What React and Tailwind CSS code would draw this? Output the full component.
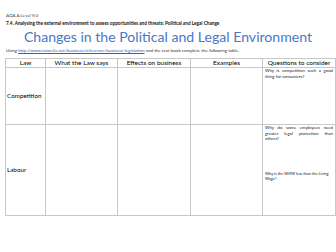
import React from "react";

const F = { fontFamily: "Lato, 'Open Sans', sans-serif" };

function Cell({ children, className = "" }) {
  return <div className={"bg-white " + className}>{children}</div>;
}

export default function App() {
  return (
    <div className="w-[336px] h-[252px] bg-white text-black overflow-hidden" style={F}>
      <div className="pl-[6px] pt-[13px]">
        <div className="text-[4.5px] leading-[6px] text-[#444]">AQA A Level Yr2</div>
        <div className="text-[4.7px] leading-[6px] font-bold mt-[1px] text-[#111] whitespace-nowrap">
          7.4. Analysing the external environment to assess opportunities and threats: Political and Legal Change
        </div>
      </div>
      <div className="text-center text-[14.1px] leading-[18px] text-[#4a77c4] mt-[2px]">
        Changes in the Political and Legal Environment
      </div>
      <div className="pl-[6px] text-[4.5px] leading-[6px] mt-[2px] text-[#333] whitespace-nowrap">
        Using <span className="text-[#3060c0] underline">http://www.tutor2u.net/business/reference/business-legislation</span> and the text book complete the following table.
      </div>
      <div className="ml-[5px] mt-[4px] w-[331px] grid grid-cols-[39px_71px_72px_71px_72px] grid-rows-[8px_56px_90px] gap-px p-px bg-[#c8c8c8]">
        <Cell className="flex items-center justify-center text-[6.5px] leading-[8px]">Law</Cell>
        <Cell className="flex items-center justify-center text-[6.5px] leading-[8px]">What the Law says</Cell>
        <Cell className="flex items-center justify-center text-[6.5px] leading-[8px]">Effects on business</Cell>
        <Cell className="flex items-center justify-center text-[6.5px] leading-[8px]">Examples</Cell>
        <Cell className="flex items-center justify-center text-[6.5px] leading-[8px]">Questions to consider</Cell>

        <Cell className="flex items-center pl-[1px] text-[6.3px]">Competition</Cell>
        <Cell />
        <Cell />
        <Cell />
        <Cell className="px-[2px] text-[4.3px] leading-[5.5px] text-justify [text-align-last:left] text-[#222]">
          Why is competition such a good thing for consumers?
        </Cell>

        <Cell className="flex items-center pl-[1px] text-[6.3px]">Labour</Cell>
        <Cell />
        <Cell />
        <Cell />
        <Cell className="px-[2px] text-[4.3px] leading-[5.5px] text-[#222]">
          <div className="text-justify [text-align-last:left]">Why do some employees need greater legal protection than others?</div>
          <div className="mt-[29px] pr-0 text-[4px] tracking-[-0.05px]">Why is the NMW less than the Living Wage?</div>
        </Cell>
      </div>
    </div>
  );
}
